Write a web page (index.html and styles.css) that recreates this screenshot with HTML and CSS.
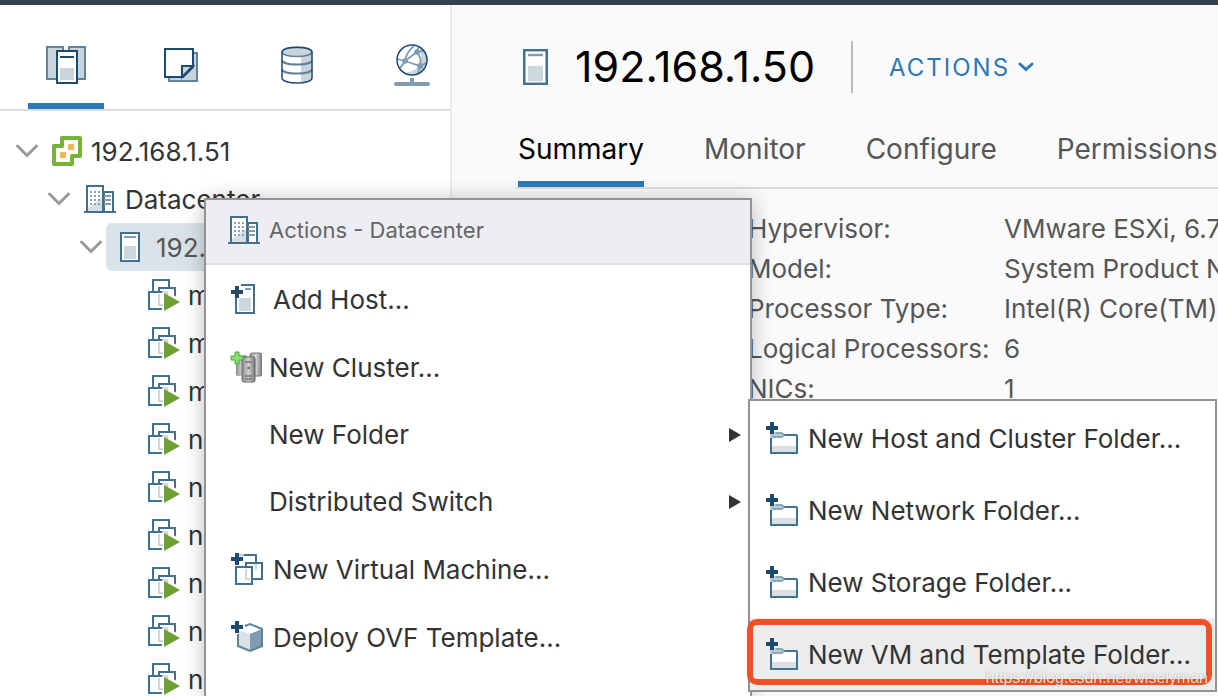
FILE: index.html
```html
<!DOCTYPE html>
<html lang="en">
<head>
  <meta charset="UTF-8">
  <title>vSphere Client - 192.168.1.50</title>
  <link rel="stylesheet" href="styles.css">
</head>
<body>

  <!-- shared icons -->
  <svg class="icon-defs" width="0" height="0">
    <symbol id="caret" viewBox="0 0 22 14">
      <path d="M1.5 2 L11 11.5 L20.5 2" fill="none" stroke="#999" stroke-width="3" stroke-linecap="round"/>
    </symbol>
    <symbol id="host" viewBox="0 0 20 30">
      <rect x="1" y="1" width="18" height="28" fill="#fff" stroke="#43708f" stroke-width="2"/>
      <rect x="4" y="4" width="12" height="2" fill="#7f9cb2"/>
      <rect x="4" y="14" width="12" height="13" fill="#cdd8de"/>
    </symbol>
    <symbol id="datacenter" viewBox="0 0 32 28">
      <rect x="20" y="7" width="9" height="20" fill="#fff" stroke="#43708f" stroke-width="2"/>
      <rect x="3" y="1" width="16" height="26" fill="#fff" stroke="#43708f" stroke-width="2"/>
      <path d="M4 26 V23 L18 13 V26Z" fill="#d5dfe6"/>
      <path d="M6 7h10M6 11h10M6 15h10M6 19h10" stroke="#8aa5b9" stroke-width="2" stroke-dasharray="2 2"/>
      <path d="M20 11h7M20 15h7M20 19h7" stroke="#7f9cb2" stroke-width="2"/>
      <rect x="0" y="26" width="32" height="2" fill="#43708f"/>
    </symbol>
    <symbol id="vm-on" viewBox="0 0 33 32">
      <rect x="5" y="1" width="16" height="16" fill="#fff" stroke="#43708f" stroke-width="2"/>
      <rect x="11" y="9" width="16" height="16" fill="#fff" stroke="#43708f" stroke-width="2"/>
      <rect x="1" y="13" width="16" height="17" fill="#fff" stroke="#43708f" stroke-width="2"/>
      <path d="M14 10 L33 20 V32 H14Z" fill="#fff"/>
      <path d="M14 13h5v5M11 15v11h4" fill="none" stroke="#cdd8de" stroke-width="2"/>
      <path d="M16 14 L32 23 L16 32Z" fill="#6f9f35"/>
    </symbol>
    <symbol id="folder-add" viewBox="0 0 32 33">
      <path d="M5 31 V13 H31 V31Z" fill="#fff"/>
      <rect x="6" y="24" width="24" height="6" fill="#d9e0e6"/>
      <path d="M5 15 V31 H31 V14 Q31 13 30 13 H18" fill="none" stroke="#43708f" stroke-width="2"/>
      <path d="M4 10 H16 L18 13 L16 16 H4Z" fill="#b9cad5"/>
      <path d="M10 11 H16 L18 13 L16 15 H6" fill="none" stroke="#7f9cb2" stroke-width="1.500"/>
      <path d="M4 0h4v4h4v4H8v4H4V8H0V4h4z" fill="#1d4a70"/>
    </symbol>
  </svg>

  <div class="topbar"></div>

  <div class="layout">
    <div class="sidebar">
      <div class="nav-tabs">
        <button class="nav-tab active" aria-label="Hosts and Clusters">
          <svg width="40" height="40" viewBox="0 0 40 40">
            <rect x="1" y="2" width="16" height="32" fill="#c9d4db" stroke="#5f829b" stroke-width="2"/>
            <rect x="23" y="2" width="16" height="32" fill="#c9d4db" stroke="#5f829b" stroke-width="2"/>
            <rect x="18" y="0" width="4" height="6" fill="#fff"/>
            <rect x="11" y="6" width="20" height="32" fill="#fff" stroke="#1d4a70" stroke-width="2"/>
            <rect x="14" y="11" width="14" height="2" fill="#1d4a70"/>
            <rect x="14" y="23" width="14" height="12" fill="#c9d4db"/>
          </svg>
        </button>
        <button class="nav-tab" aria-label="VMs and Templates">
          <svg width="34" height="34" viewBox="0 0 34 34">
            <rect x="5" y="5" width="28" height="28" fill="#c9d4db" stroke="#5f829b" stroke-width="2"/>
            <path d="M1 1 H29 V19 L19 29 H1Z" fill="#fff" stroke="#1d4a70" stroke-width="2"/>
            <path d="M18 18 H29 L18 29Z" fill="#c9d4db" stroke="#1d4a70" stroke-width="2"/>
          </svg>
        </button>
        <button class="nav-tab" aria-label="Storage">
          <svg width="32" height="38" viewBox="0 0 32 38">
            <path d="M1 6 V32 C1 39 31 39 31 32 V6Z" fill="#fff"/>
            <path d="M20 10 L31 7 V32 C31 35 26 37 20 37Z" fill="#c9d4db"/>
            <path d="M1 14 C1 20 31 20 31 14 M1 23 C1 29 31 29 31 23" fill="none" stroke="#5f829b" stroke-width="2"/>
            <ellipse cx="16" cy="6" rx="15" ry="4.5" fill="#c9d4db" stroke="#5f829b" stroke-width="1.6"/>
            <path d="M1 6 V32 C1 38.500 31 38.500 31 32 V6 C29 -0.300 3 -0.300 1 6" fill="none" stroke="#1d4a70" stroke-width="1.500"/>
          </svg>
        </button>
        <button class="nav-tab" aria-label="Networking">
          <svg width="36" height="42" viewBox="0 0 36 42">
            <circle cx="18" cy="16" r="15" fill="#fff"/>
            <path d="M29 6 A15 15 0 0 1 10 29 Q24 27 26 19 Q29 12 25 3Z" fill="#c9d4db"/>
            <path d="M3 15 L11 17 L23 8 L25 2 M23 8 Q28 14 26 22 L11 17 Q9 21 6 24 M11 17 Q13 7 20 2 M26 22 L24 29 M23 8 L29 7 M26 22 L32 19" fill="none" stroke="#7f9cb2" stroke-width="1.800"/>
            <circle cx="11" cy="17" r="2.800" fill="#7f9cb2"/>
            <circle cx="23" cy="8" r="2.800" fill="#7f9cb2"/>
            <circle cx="26" cy="22" r="3" fill="#7f9cb2"/>
            <circle cx="18" cy="16" r="15" fill="none" stroke="#1d4a70" stroke-width="1.500"/>
            <rect x="16" y="34" width="4" height="6" fill="#7f9cb2"/>
            <rect x="0" y="38" width="36" height="4" rx="2" fill="#7f9cb2"/>
          </svg>
        </button>
      </div>

      <ul class="tree">
        <li class="node">
          <svg class="caret"><use href="#caret"/></svg>
          <span class="label">
            <svg width="30" height="30" viewBox="0 0 30 30">
              <path d="M10 2 H28 V20 H20 V28 H2 V10 H10Z" fill="#fff" stroke="#74b239" stroke-width="4" stroke-linejoin="round"/>
              <rect x="16" y="8" width="6" height="6" fill="#f7b84b"/>
              <rect x="8" y="16" width="6" height="6" fill="#f7b84b"/>
            </svg>
            192.168.1.51
          </span>
        </li>
        <li class="node level-2">
          <svg class="caret"><use href="#caret"/></svg>
          <span class="label">
            <svg width="32" height="28"><use href="#datacenter"/></svg>
            Datacenter
          </span>
        </li>
        <li class="node level-3">
          <svg class="caret"><use href="#caret"/></svg>
          <span class="label selected">
            <svg width="20" height="30"><use href="#host"/></svg>
            192.168.1.50
          </span>
        </li>
        <li class="node vm"><svg width="33" height="32"><use href="#vm-on"/></svg>m</li>
        <li class="node vm"><svg width="33" height="32"><use href="#vm-on"/></svg>m</li>
        <li class="node vm"><svg width="33" height="32"><use href="#vm-on"/></svg>m</li>
        <li class="node vm"><svg width="33" height="32"><use href="#vm-on"/></svg>n</li>
        <li class="node vm"><svg width="33" height="32"><use href="#vm-on"/></svg>n</li>
        <li class="node vm"><svg width="33" height="32"><use href="#vm-on"/></svg>n</li>
        <li class="node vm"><svg width="33" height="32"><use href="#vm-on"/></svg>n</li>
        <li class="node vm"><svg width="33" height="32"><use href="#vm-on"/></svg>n</li>
        <li class="node vm"><svg width="33" height="32"><use href="#vm-on"/></svg>n</li>
      </ul>
    </div>

    <div class="content">
      <div class="header">
        <svg width="25" height="36" viewBox="0 0 20 30" preserveAspectRatio="none"><use href="#host"/></svg>
        <h1>192.168.1.50</h1>
        <button class="actions-btn">
          ACTIONS
          <svg width="16" height="10" viewBox="0 0 16 10">
            <path d="M2 2 L8 7.500 L14 2" fill="none" stroke="#2f78b7" stroke-width="3" stroke-linecap="round"/>
          </svg>
        </button>
      </div>

      <div class="tabs">
        <button class="tab active">Summary</button>
        <button class="tab">Monitor</button>
        <button class="tab">Configure</button>
        <button class="tab">Permissions</button>
      </div>

      <dl class="details">
        <dt>Hypervisor:</dt><dd>VMware ESXi, 6.7</dd>
        <dt>Model:</dt><dd>System Product Name</dd>
        <dt>Processor Type:</dt><dd>Intel(R) Core(TM)</dd>
        <dt>Logical Processors:</dt><dd>6</dd>
        <dt>NICs:</dt><dd>1</dd>
      </dl>
    </div>
  </div>

  <div class="menu context-menu">
    <div class="menu-title">
      <svg width="32" height="28"><use href="#datacenter"/></svg>
      Actions - Datacenter
    </div>
    <button class="menu-item">
      <svg width="36" height="32" viewBox="0 0 36 32">
        <rect x="6" y="2" width="18" height="28" fill="#fff" stroke="#43708f" stroke-width="2"/>
        <rect x="15" y="5" width="6" height="2" fill="#7f9cb2"/>
        <rect x="9" y="15" width="12" height="13" fill="#cdd8de"/>
        <path d="M0 0h11v5h3v10H0z" fill="#fff"/>
        <path d="M5 3h4v4h4v4H9v4H5v-4H1V7h4z" fill="#254a63"/>
      </svg>
      Add Host...
    </button>
    <button class="menu-item">
      <svg width="32" height="32" viewBox="0 0 32 32">
        <defs>
          <linearGradient id="steel">
            <stop offset="0" stop-color="#8a8a8a"/>
            <stop offset="0.500" stop-color="#d2d2d2"/>
            <stop offset="1" stop-color="#777"/>
          </linearGradient>
        </defs>
        <rect x="6" y="4" width="11" height="21" rx="2" fill="url(#steel)"/>
        <rect x="20" y="2" width="12" height="23" rx="2" fill="url(#steel)" stroke="#777"/>
        <rect x="12" y="6" width="13" height="25" rx="2" fill="url(#steel)" stroke="#686868"/>
        <path d="M15 11h7M15 25h7M15 28h7" stroke="#777" stroke-width="1.500"/>
        <circle cx="18.500" cy="17" r="1.300" fill="#666"/>
        <path d="M5 1h4v4h4v4H9v4H5V9H1V5h4z" fill="#86df6d" stroke="#48a83a" stroke-linejoin="round"/>
      </svg>
      New Cluster...
    </button>
    <button class="menu-item no-icon">New Folder<span class="arrow"></span></button>
    <button class="menu-item no-icon">Distributed Switch<span class="arrow"></span></button>
    <button class="menu-item">
      <svg width="36" height="32" viewBox="0 0 36 32">
        <path d="M9 2 H26 V16" fill="none" stroke="#b9cad5" stroke-width="2"/>
        <path d="M14 2 H26 V9" fill="none" stroke="#43708f" stroke-width="2"/>
        <rect x="16" y="10" width="16" height="16" fill="#fff" stroke="#43708f" stroke-width="2"/>
        <path d="M26 11v6" fill="none" stroke="#cdd8de" stroke-width="2"/>
        <rect x="6" y="14" width="16" height="17" fill="#fff" stroke="#43708f" stroke-width="2"/>
        <path d="M16 16v10h4" fill="none" stroke="#cdd8de" stroke-width="2"/>
        <path d="M5 0h4v4h4v4H9v4H5V8H1V4h4z" fill="#1d4a70"/>
      </svg>
      New Virtual Machine...
    </button>
    <button class="menu-item">
      <svg width="36" height="32" viewBox="0 0 36 32">
        <path d="M20 3 L32 8 V25 L20 30 L8 25 V8Z" fill="#fff"/>
        <path d="M8 9 L20 13 V30 L8 25Z" fill="#d9e0e6"/>
        <path d="M32 8 L20 13 V30 L32 25Z" fill="#7f9cb2"/>
        <path d="M15 5 L20 3 L32 8 V25 L20 30 L8 25 V13" fill="none" stroke="#5f829b" stroke-width="2"/>
        <path d="M5 0h4v4h4v4H9v4H5V8H1V4h4z" fill="#1d4a70"/>
      </svg>
      Deploy OVF Template...
    </button>
  </div>

  <div class="menu submenu">
    <button class="menu-item"><svg width="32" height="33"><use href="#folder-add"/></svg>New Host and Cluster Folder...</button>
    <button class="menu-item"><svg width="32" height="33"><use href="#folder-add"/></svg>New Network Folder...</button>
    <button class="menu-item"><svg width="32" height="33"><use href="#folder-add"/></svg>New Storage Folder...</button>
    <button class="menu-item hover"><svg width="32" height="33"><use href="#folder-add"/></svg>New VM and Template Folder...</button>
    <div class="highlight"></div>
  </div>

  <div class="watermark">https://blog.csdn.net/wiselyman</div>

</body>
</html>
```
FILE: styles.css
```css
* {
  margin: 0;
  padding: 0;
  box-sizing: border-box;
}

body {
  position: relative;
  display: flex;
  flex-direction: column;
  height: 100vh;
  overflow: hidden;
  font-family: Inter, "Liberation Sans", sans-serif;
  font-size: 26px;
  color: #333;
  background-color: #fafafa;
}

button {
  border: none;
  background: none;
  font: inherit;
  color: inherit;
  cursor: pointer;
}

svg {
  flex-shrink: 0;
}

.icon-defs {
  position: absolute;
}

.topbar {
  height: 5px;
  flex-shrink: 0;
  background-color: #32424f;
}

.layout {
  flex: 1;
  display: flex;
  min-height: 0;
}

/* left side */
.sidebar {
  width: 452px;
  flex-shrink: 0;
  background-color: #fff;
  border-right: 2px solid #e8ecf1;
  overflow: hidden;
}

.nav-tabs {
  display: flex;
  gap: 40px;
  height: 106px;
  padding-left: 28px;
  border-bottom: 2px solid #ddd;
}

.nav-tab {
  width: 76px;
  padding-top: 22px;
  border-bottom: 6px solid transparent;
  display: flex;
  align-items: center;
  justify-content: center;
}

.nav-tab.active {
  border-bottom-color: #2f78b7;
}

.tree {
  list-style: none;
  padding-top: 16px;
}

.node {
  display: flex;
  align-items: center;
  height: 48px;
  padding-left: 16px;
  white-space: nowrap;
}

.level-2 {
  padding-left: 48px;
}

.level-3 {
  padding-left: 80px;
}

.vm {
  padding-left: 148px;
  gap: 7px;
}

.caret {
  width: 22px;
  height: 14px;
}

.label {
  flex: 1;
  display: flex;
  align-items: center;
  gap: 9px;
  height: 48px;
  padding-left: 14px;
}

.label.selected {
  margin-left: 4px;
  padding-left: 14px;
  gap: 16px;
  border-radius: 6px;
  background-color: #d9e3e9;
  color: #565656;
}

/* right side */
.content {
  flex: 1;
  min-width: 0;
  margin-left: 4px;
  padding-left: 60px;
  overflow: hidden;
}

.header {
  display: flex;
  align-items: center;
  height: 124px;
  padding-left: 7px;
}

.header h1 {
  margin-left: 27px;
  padding-bottom: 3px;
  font-size: 43px;
  font-weight: 400;
  color: #000;
}

.actions-btn {
  display: flex;
  align-items: center;
  gap: 8px;
  height: 52px;
  margin-left: 36px;
  padding-left: 36px;
  border-left: 2px solid #bbb;
  font-size: 24px;
  letter-spacing: 2px;
  color: #2f78b7;
}

.tabs {
  display: flex;
  gap: 60px;
  height: 60px;
  padding-left: 2px;
  border-bottom: 2px solid #ddd;
}

.tab {
  padding-bottom: 12px;
  border-bottom: 6px solid transparent;
  font-size: 28px;
  color: #565656;
}

.tab.active {
  border-bottom-color: #2f78b7;
  color: #000;
}

.details {
  display: grid;
  grid-template-columns: 256px 1fr;
  padding: 20px 0 0 232px;
  line-height: 40px;
  white-space: nowrap;
  color: #565656;
}

/* menus */
.menu {
  position: absolute;
  background-color: #fff;
  border: 2px solid #939393;
  box-shadow: 0 2px 20px rgba(0, 0, 0, 0.25);
}

.context-menu {
  top: 198px;
  bottom: 0;
  left: 204px;
  width: 548px;
  border-bottom: none;
}

.menu-title {
  display: flex;
  align-items: center;
  gap: 9px;
  height: 65px;
  padding: 0 0 3px 22px;
  border-bottom: 2px solid #dddfe4;
  background-color: #edeef3;
  font-size: 22px;
  color: #666;
}

.menu-item {
  display: flex;
  align-items: center;
  gap: 7px;
  width: 100%;
  height: 68px;
  padding-left: 24px;
  white-space: nowrap;
}

.no-icon {
  height: 67px;
  padding: 0 9px 0 63px;
  justify-content: space-between;
}

.arrow {
  border: 7px solid transparent;
  border-left: 12px solid #333;
  border-right: none;
}

.submenu {
  top: 399px;
  left: 748px;
  width: 469px;
  padding-top: 1px;
  box-shadow: none;
}

.submenu .menu-item {
  height: 72px;
  gap: 10px;
  padding-left: 16px;
}

.submenu .hover {
  background-color: #ececec;
}

.highlight {
  position: absolute;
  left: -3px;
  right: 3px;
  bottom: 5px;
  height: 66px;
  border: 6px solid #f05023;
  border-radius: 10px;
  pointer-events: none;
}

.watermark {
  position: absolute;
  right: 10px;
  bottom: 10px;
  font-family: "Liberation Sans", sans-serif;
  font-size: 16px;
  line-height: 16px;
  color: rgba(255, 255, 255, 0.8);
  text-shadow: 0 0 2px rgba(0, 0, 0, 0.3);
}
```
